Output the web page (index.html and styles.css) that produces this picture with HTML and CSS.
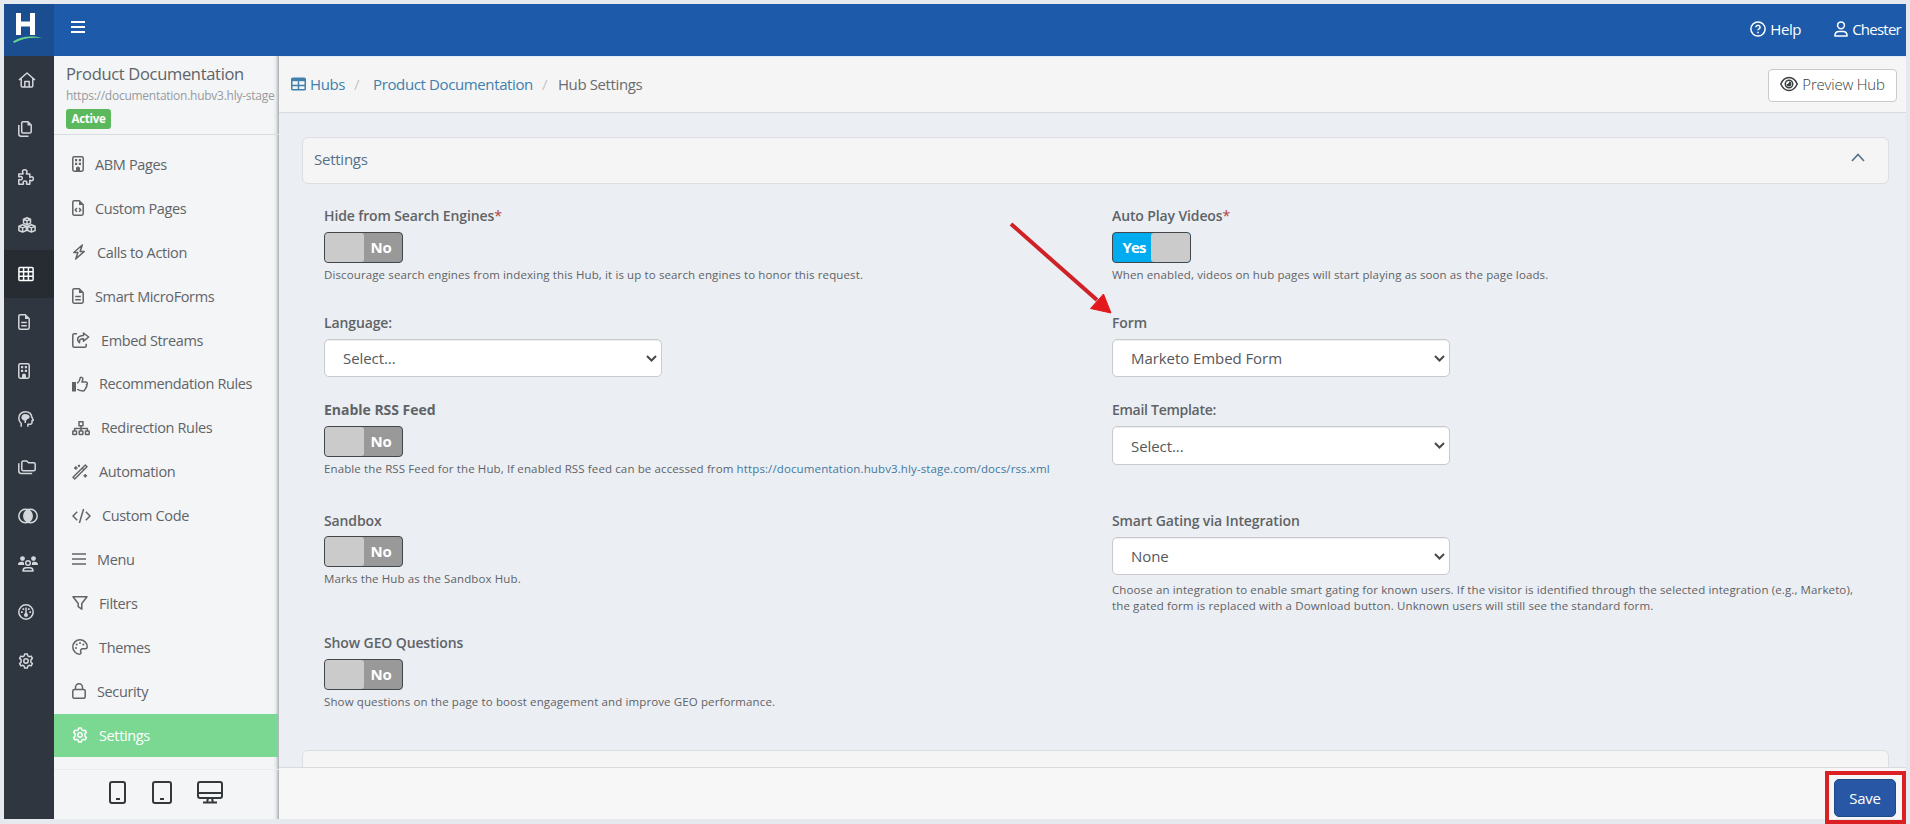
FILE: index.html
```html
<!DOCTYPE html>
<html lang="en">
<head>
<meta charset="utf-8">
<title>Hub Settings</title>
<link rel="stylesheet" href="styles.css">
</head>
<body>
<svg class="defs" aria-hidden="true">
  <symbol id="file" viewBox="0 0 12 16"><path d="M2.2.8h5.1l3.9 3.9v9.1c0 .8-.6 1.4-1.4 1.4H2.2c-.8 0-1.4-.6-1.4-1.4V2.2C.8 1.4 1.4.8 2.2.8z"/><path class="fill" d="M7 1l4 4H7z"/><path d="M3.2 8.5h5.6M3.2 11.7h5.6"/></symbol>
  <symbol id="filecode" viewBox="0 0 12 16"><path d="M2.2.8h5.1l3.9 3.9v9.1c0 .8-.6 1.4-1.4 1.4H2.2c-.8 0-1.4-.6-1.4-1.4V2.2C.8 1.4 1.4.8 2.2.8z"/><path class="fill" d="M7 1l4 4H7z"/><path d="M4.9 8.1L3.2 9.9l1.7 1.8M7.1 8.1l1.7 1.8-1.7 1.8"/></symbol>
  <symbol id="building" viewBox="0 0 12 16"><rect x=".8" y=".8" width="10.4" height="14.4" rx="1.4"/><path class="fill" d="M3 3h2.2v2.2H3zM6.8 3H9v2.2H6.800zM3 6.700h2.200v2.200H3zM6.800 6.700H9v2.200H6.800zM4 15v-2.500a2 2 0 0 1 4 0V15z"/></symbol>
  <symbol id="gear" viewBox="0 0 16 16"><path d="M6.700.9h2.600l.5 2 1.300.8 2-.6 1.300 2.300-1.500 1.400v2.400l1.500 1.400-1.300 2.300-2-.6-1.300.8-.5 2H6.700l-.5-2-1.300-.8-2 .6-1.300-2.300 1.500-1.400V6.800L1.600 5.400l1.300-2.300 2 .6 1.300-.8z"/><circle cx="8" cy="8" r="2.200"/></symbol>
</svg>
<div class="app">
  <header class="topbar">
    <div class="brand"><svg class="brand-mark" viewBox="0 0 32 32" width="32" height="32"><path class="letter-bar" d="M6.500 1v22M20.500 1v22M6.500 12h14"/><path class="swoosh" d="M1 29.500C9 24 20 23.500 30 26 19 25 10 26.500 2 31z"/></svg></div>
    <svg class="burger" viewBox="0 0 14 12" width="14" height="12"><path d="M0 1h14M0 6h14M0 11h14"/></svg>
    <div class="user-links">
      <a class="user-link"><svg class="icon" viewBox="0 0 16 16" width="16" height="16"><circle cx="8" cy="8" r="7.100"/><path d="M5.900 6.300a2.100 1.900 0 1 1 3.200 1.600c-.7.4-1.100.7-1.100 1.400"/><path d="M8 10.700v1.500"/></svg>Help</a>
      <a class="user-link user-name"><svg class="icon" viewBox="0 0 14 16" width="14" height="16"><circle cx="7" cy="4.300" r="3.400"/><path d="M.9 15.100c0-3 1.700-4.700 4-4.700h4.200c2.300 0 4 1.700 4 4.700z"/></svg>Chester</a>
    </div>
  </header>
  <div class="body">
    <nav class="rail">
      <a class="rail-item"><svg class="icon" viewBox="0 0 18 16" width="18" height="16"><path d="M1 8l8-7 8 7M3.200 6.500v7.300c0 .8.5 1.300 1.300 1.300h9c.8 0 1.300-.5 1.300-1.300V6.500M6.800 15V9.500h4.400V15"/></svg></a>
      <a class="rail-item"><svg class="icon" viewBox="0 0 14 16" width="14" height="16"><path d="M5 .8h5l3.200 3.200v6.800c0 .8-.5 1.300-1.300 1.300H5c-.8 0-1.300-.5-1.300-1.300V2.100C3.700 1.300 4.200.8 5 .8zM.8 4v9c0 1.300.9 2.200 2.200 2.200h7.500"/><path class="fill" d="M9.500 1v3.500H13z"/></svg></a>
      <a class="rail-item"><svg class="icon" viewBox="0 0 16 16" width="16" height="16"><path d="M.8 5h4.100c.6-.4-.4-1-.4-2.200C4.500 1.600 5.400.8 6.700.8S9 1.600 9 2.800C9 4 8 4.600 8.600 5h3.200v3.300c.4.500 1-.5 2-.5.900 0 1.500.8 1.500 2s-.6 2-1.500 2c-1 0-1.600-1-2-.5v3.900H8.700c-.6-.4.200-1 .2-1.800s-.9-1.300-1.900-1.300-1.900.5-1.900 1.300.8 1.400.2 1.800H.8v-4.500c.4-.5 1 .2 1.900.2S4.300 10.200 4.300 9.200 3.600 7.500 2.700 7.500 1.200 8.200.8 7.700z"/></svg></a>
      <a class="rail-item"><svg class="icon" viewBox="0 0 18 16" width="18" height="16"><path d="M9 .8l3.500 1.400v3.900L9 7.600 5.500 6.100V2.200zM5.500 2.300L9 3.800l3.500-1.500M9 3.800v3.600M4.600 7.800l3.700 1.500v4.200l-3.700 1.600L.9 13.500V9.300zM.9 9.400l3.700 1.500 3.700-1.500M4.600 11v4M13.400 7.800l3.700 1.500v4.200l-3.700 1.600-3.700-1.600V9.300zM9.700 9.400l3.700 1.500 3.700-1.500M13.400 11v4"/></svg></a>
      <a class="rail-item rail-active"><svg class="icon" viewBox="0 0 16 16" width="16" height="16"><rect x=".9" y="1.400" width="14.200" height="13.200" rx="1"/><path d="M1 5.800h14M1 10.200h14M5.600 1.500v13M10.400 1.500v13"/></svg></a>
      <a class="rail-item"><svg class="icon" width="12" height="16"><use href="#file"/></svg></a>
      <a class="rail-item"><svg class="icon" width="12" height="16"><use href="#building"/></svg></a>
      <a class="rail-item"><svg class="icon" viewBox="0 0 16 16" width="16" height="16"><path d="M3.200 15.700v-3.400C1.700 11.200.8 9.500.8 7.300.8 3.500 3.500.8 7.300.8c3.600 0 6.200 2.300 6.600 5.500l1.400 2.900-1.300.6v2c0 .9-.6 1.400-1.400 1.400H9.900v2.500"/><path class="fill" d="M3.400 6.600C3.400 4.600 5 3 7 3s4.300.8 4.600 2.600c.3 1.500-.7 2.500-2.200 2.500L8 10v2H6.500V9.500c-1.700 0-3.100-1.200-3.100-2.900z"/></svg></a>
      <a class="rail-item"><svg class="icon" viewBox="0 0 18 16" width="18" height="16"><path d="M5.300 2h3.500l1.700 1.800h5.200c.8 0 1.500.6 1.500 1.500v4.900c0 .9-.6 1.500-1.500 1.500H5.300c-.9 0-1.500-.6-1.500-1.500V3.500C3.800 2.600 4.400 2 5.300 2zM.8 4.200v7.900c0 1.400 1 2.400 2.400 2.400h11"/></svg></a>
      <a class="rail-item"><svg class="icon" viewBox="0 0 20 16" width="20" height="16"><circle cx="7.500" cy="8" r="6.700"/><circle cx="12.500" cy="8" r="6.700"/><path class="fill" d="M10 1.900a6.700 6.700 0 0 1 0 12.200 6.700 6.700 0 0 1 0-12.200z"/></svg></a>
      <a class="rail-item"><svg class="icon" viewBox="0 0 20 16" width="20" height="16"><g class="fill"><circle cx="4.500" cy="2.600" r="2.400"/><circle cx="15.500" cy="2.600" r="2.400"/><path d="M0 9c0-2.200 1.200-3.300 3.500-3.300 1 0 2 .3 2.500.8C5.800 7.800 6 8.700 6.500 9zM20 9c0-2.200-1.200-3.300-3.500-3.300-1 0-2 .3-2.500.8.2 1.300 0 2.200-.5 2.500z"/></g><circle cx="10" cy="7" r="2.300"/><path d="M5 15.100c0-2 1.200-3.300 3-3.300h4c1.800 0 3 1.300 3 3.300z"/></svg></a>
      <a class="rail-item"><svg class="icon" viewBox="0 0 16 16" width="16" height="16"><circle cx="8" cy="8" r="7.200"/><circle class="fill" cx="8" cy="11" r="2"/><path d="M8 10V3.500"/><path class="fill" d="M3 7.300h1.700V9H3zM11.300 7.300H13V9h-1.700zM4.500 4.200h1.700v1.700H4.500zM9.900 4.200h1.700v1.700H9.900z"/></svg></a>
      <a class="rail-item"><svg class="icon" width="16" height="16"><use href="#gear"/></svg></a>
    </nav>
    <aside class="sidebar">
      <div class="hub-head">
        <div class="hub-name">Product Documentation</div>
        <div class="hub-url">https://documentation.hubv3.hly-stage</div>
        <span class="badge">Active</span>
      </div>
      <div class="menu">
        <a class="menu-item"><svg class="icon" width="12" height="16"><use href="#building"/></svg>ABM Pages</a>
        <a class="menu-item"><svg class="icon" width="12" height="16"><use href="#filecode"/></svg>Custom Pages</a>
        <a class="menu-item"><svg class="icon" viewBox="0 0 14 16" width="14" height="16"><path d="M10.300 1L1.800 8.500h4.100L3.700 15l8.500-7.500H8.100z"/></svg>Calls to Action</a>
        <a class="menu-item"><svg class="icon" width="12" height="16"><use href="#file"/></svg>Smart MicroForms</a>
        <a class="menu-item"><svg class="icon" viewBox="0 0 18 16" width="18" height="16"><path d="M5 1.800H2.300C1.400 1.800.8 2.400.8 3.300v10.400c0 .9.6 1.500 1.500 1.500h10.400c.9 0 1.500-.6 1.500-1.500v-2"/><path d="M11.500 1l5.200 4-5.200 4.200V6.700c-3-.1-4.300.7-4 4.100C4.300 8 5 3.600 11.500 3.400z"/></svg>Embed Streams</a>
        <a class="menu-item"><svg class="icon" viewBox="0 0 16 16" width="16" height="16"><path class="fill" d="M0 6h4v9.500H0z"/><path d="M5.300 7.300c1.800-1.400 2.500-3 2.700-4.800.3-1.700 3-1.500 2.800.6-.1 1.200-.5 2-.9 2.900h3.800c2 0 2 2.300.8 2.700.8.900.3 2.300-.6 2.500.2 1.300-.2 2-1.200 2.200 0 1-.7 1.500-1.700 1.500-2.500 0-4.300-.2-5.700-1.600"/></svg>Recommendation Rules</a>
        <a class="menu-item"><svg class="icon" viewBox="0 0 18 16" width="18" height="16"><rect x="7" y="1.800" width="4" height="4"/><rect x=".8" y="11" width="3.700" height="3.500" rx=".6"/><rect x="7.200" y="11" width="3.700" height="3.500" rx=".6"/><rect x="13.500" y="11" width="3.700" height="3.500" rx=".6"/><path d="M9 6v5M2.600 11V8.400h12.800V11"/></svg>Redirection Rules</a>
        <a class="menu-item"><svg class="icon" viewBox="0 0 16 16" width="16" height="16"><path d="M1 13.300L13.300 1l1.700 1.700L2.700 15zM10.300 4l1.700 1.700M2 4h3.600M3.800 2.200v3.600M11.500 11.700h3.600M13.300 9.900v3.600M7 .7v2.200M5.900 1.800h2.200"/></svg>Automation</a>
        <a class="menu-item"><svg class="icon" viewBox="0 0 19 16" width="19" height="16"><path d="M5.200 3.700L1 8l4.200 4.300M13.800 3.700L18 8l-4.200 4.300M11.600 1L7.400 15"/></svg>Custom Code</a>
        <a class="menu-item"><svg class="icon" viewBox="0 0 14 16" width="14" height="16"><path d="M0 3h14M0 8h14M0 13h14"/></svg>Menu</a>
        <a class="menu-item"><svg class="icon" viewBox="0 0 16 16" width="16" height="16"><path d="M1 1.800h14L9.800 8.500v5.700l-3.600-2.500V8.500z"/></svg>Filters</a>
        <a class="menu-item"><svg class="icon" viewBox="0 0 16 16" width="16" height="16"><path d="M15.200 7.800C15.200 3.900 12 .8 8 .8S.8 4 .8 8 4 15.200 7.500 15.200c1.500 0 1.700-1.100 1.300-2.100-.8-2 .3-3.300 2-3.300h2.500c1.100 0 1.900-.8 1.900-2z"/><g class="fill"><circle cx="4" cy="9" r="1"/><circle cx="4.700" cy="5.600" r="1"/><circle cx="8" cy="3.900" r="1"/><circle cx="11.300" cy="5.600" r="1"/></g></svg>Themes</a>
        <a class="menu-item"><svg class="icon" viewBox="0 0 14 16" width="14" height="16"><rect x=".8" y="6.500" width="12.400" height="8.700" rx="1.500"/><path d="M3.500 6.500v-2a3.500 3.700 0 0 1 7 0v2"/></svg>Security</a>
        <a class="menu-item menu-active"><svg class="icon" width="16" height="16"><use href="#gear"/></svg>Settings</a>
      </div>
      <div class="devices">
        <svg class="device" viewBox="0 0 18 23" width="18" height="23"><rect x="1" y="1" width="15" height="21" rx="2"/><path d="M7 18h4"/></svg>
        <svg class="device" viewBox="0 0 20 23" width="20" height="23"><rect x="1" y="1" width="18" height="21" rx="2"/><path d="M8 18h4"/></svg>
        <svg class="device" viewBox="0 0 26 23" width="26" height="23"><rect x="1" y="1" width="24" height="16" rx="2"/><path d="M1 12h24M11 17l-.8 4M15 17l.8 4M6 21.500h14"/></svg>
      </div>
    </aside>
    <main class="main">
      <div class="crumbs">
        <a class="crumb-link"><svg class="crumb-icon" viewBox="0 0 16 14" width="15" height="14"><path class="fill" d="M1 1h14v3H1z"/><rect x=".8" y=".8" width="14.400" height="12.400" rx="1.200"/><path d="M1 8.500h14M8 4v9"/></svg>Hubs</a>
        <span class="slash">/</span>
        <a class="crumb-link crumb-hub">Product Documentation</a>
        <span class="slash">/</span>
        <span class="crumb-here">Hub Settings</span>
        <button class="preview"><svg class="eye" viewBox="0 0 18 16" width="18" height="16"><path d="M.8 8C2.500 4 5.500 1.500 9 1.500S15.500 4 17.200 8C15.500 12 12.500 14.500 9 14.500S2.500 12 .8 8z"/><circle cx="9" cy="8" r="3.700"/><path class="fill" d="M9 5.600A2.400 2.400 0 1 1 6.600 8C8.200 8.300 9.200 7.200 9 5.600z"/></svg>Preview Hub</button>
      </div>
      <div class="content">
        <section class="panel-head"><span>Settings</span><svg class="chevron" viewBox="0 0 14 9" width="14" height="9"><path d="M1 8l6-6.500L13 8"/></svg></section>
        <form class="fields">
          <div class="field"><label class="label">Hide from Search Engines<i class="req">*</i></label><div class="switch"><b class="knob"></b><b class="state">No</b></div><p class="hint">Discourage search engines from indexing this Hub, it is up to search engines to honor this request.</p></div>
          <div class="field"><label class="label">Auto Play Videos<i class="req">*</i></label><div class="switch switch-on"><b class="state">Yes</b><b class="knob"></b></div><p class="hint">When enabled, videos on hub pages will start playing as soon as the page loads.</p></div>
          <div class="field"><label class="label">Language:</label><div class="select">Select...<svg class="caret" viewBox="0 0 11 7" width="11" height="7"><path d="M1 1l4.500 4.500L10 1"/></svg></div></div>
          <div class="field"><label class="label">Form</label><div class="select">Marketo Embed Form<svg class="caret" viewBox="0 0 11 7" width="11" height="7"><path d="M1 1l4.500 4.500L10 1"/></svg></div></div>
          <div class="field"><label class="label label-bold">Enable RSS Feed</label><div class="switch"><b class="knob"></b><b class="state">No</b></div><p class="hint">Enable the RSS Feed for the Hub, If enabled RSS feed can be accessed from <a class="hint-link">https://documentation.hubv3.hly-stage.com/docs/rss.xml</a></p></div>
          <div class="field"><label class="label label-colon">Email Template:</label><div class="select select-tall">Select...<svg class="caret" viewBox="0 0 11 7" width="11" height="7"><path d="M1 1l4.500 4.500L10 1"/></svg></div></div>
          <div class="field"><label class="label label-tight">Sandbox</label><div class="switch"><b class="knob"></b><b class="state">No</b></div><p class="hint">Marks the Hub as the Sandbox Hub.</p></div>
          <div class="field"><label class="label">Smart Gating via Integration</label><div class="select">None<svg class="caret" viewBox="0 0 11 7" width="11" height="7"><path d="M1 1l4.500 4.500L10 1"/></svg></div><p class="hint hint-select">Choose an integration to enable smart gating for known users. If the visitor is identified through the selected integration (e.g., Marketo),<br>the gated form is replaced with a Download button. Unknown users will still see the standard form.</p></div>
          <div class="field"><label class="label">Show GEO Questions</label><div class="switch"><b class="knob"></b><b class="state">No</b></div><p class="hint">Show questions on the page to boost engagement and improve GEO performance.</p></div>
        </form>
        <section class="panel-head"></section>
      </div>
      <footer class="footer"><button class="save">Save</button></footer>
    </main>
  </div>
</div>
<svg class="arrow" viewBox="0 0 104 94" width="104" height="94"><path class="arrow-line" d="M2 4l86 76"/><path class="arrow-tip" d="M102 93L81.500 88.500 94.500 74z"/></svg>
<div class="highlight"></div>
</body>
</html>
```
FILE: styles.css
```css
* { box-sizing: border-box; }
body { margin: 0; width: 1910px; height: 824px; overflow: hidden; padding: 4px 5px 5px 4px; background: #e6e9ed; font-family: "Open Sans", "Noto Sans", sans-serif; color: #5f6366; }
.defs { position: absolute; width: 0; height: 0; }
svg { flex: none; fill: none; stroke: currentColor; stroke-width: 1.5; stroke-linejoin: round; }
.fill { fill: currentColor; stroke: none; }
.app { width: 1902px; height: 815px; display: flex; flex-direction: column; overflow: hidden; }
.topbar { height: 52px; flex: none; display: flex; align-items: center; background: #1d5aa9; color: #fff; }
.brand { width: 50px; height: 52px; padding: 8px 0 0 8px; background: #1b4e91; }
.brand-mark { display: block; }
.letter-bar { stroke: #fff; stroke-width: 5; }
.swoosh { fill: #69d58e; stroke: none; }
.burger { margin: -6px 0 0 17px; stroke-width: 1.8; }
.user-links { margin-left: auto; display: flex; gap: 33px; padding: 0 5px 3px 0; }
.user-link { display: flex; align-items: center; gap: 4px; font-size: 15px; letter-spacing: -.42px; }
.user-name { letter-spacing: -.75px; }
.body { flex: 1; min-height: 0; display: flex; }
.rail { width: 50px; flex: none; background: #30363f; color: #d4d8dc; }
.rail-item { display: flex; align-items: center; height: 48.400px; padding-left: 14px; }
.rail-active { background: #272c33; color: #fff; }
.sidebar { width: 225px; flex: none; display: flex; flex-direction: column; overflow: hidden; background: linear-gradient(to right, #f4f5f7 219px, #e6e8ea 222px, #a9adb1 225px); }
.hub-head { height: 79px; padding: 5px 0 0 12px; border-bottom: 1px solid #d9dbde; white-space: nowrap; }
.hub-name { font-size: 16.500px; line-height: 25px; letter-spacing: -.32px; }
.hub-url { font-size: 12px; line-height: 18px; letter-spacing: -.26px; margin-top: 1px; color: #979a9d; }
.badge { display: block; width: 45px; height: 20px; margin-top: 4px; border-radius: 3px; background: #5cb85c; color: #fff; font-size: 11.500px; font-weight: 700; line-height: 20px; text-align: center; letter-spacing: -.3px; }
.menu { padding-top: 8px; }
.menu-item { display: flex; align-items: center; gap: 11px; height: 43.900px; width: 224px; padding: 0 0 1px 18px; font-size: 14.500px; letter-spacing: -.36px; color: #616467; }
.menu-active { background: #7bd892; color: #fff; }
.devices { flex: 1; margin-top: 12px; padding: 11px 0 0 55px; display: flex; align-items: flex-start; gap: 25px; border-top: 1px solid #e9ebed; }
.device { color: #35383a; stroke-width: 2; }
.main { flex: 1; min-width: 0; display: flex; flex-direction: column; background: #ebeef3; }
.crumbs { flex: none; height: 57px; display: flex; align-items: center; padding: 0 9px 2px 12px; background: #f5f5f5; border-top: 1px solid #e3ebf5; border-bottom: 1px solid #d8dadd; font-size: 15px; letter-spacing: -.38px; }
.crumb-link { display: flex; align-items: center; gap: 4px; color: #3f80ad; }
.crumb-icon { stroke-width: 1.600; }
.slash { width: 8px; margin: 0 8px 0 9px; color: #c3c6c8; }
.crumb-hub { margin-left: 3px; }
.crumb-here { color: #696c6f; }
.preview { margin-left: auto; width: 129px; height: 33px; margin-top: 3px; padding: 0 0 2px; display: flex; align-items: center; justify-content: center; gap: 4px; border: 1px solid #c8cacc; border-radius: 4px; background: #fff; color: #3b3e40; font: 300 15px "Open Sans", sans-serif; letter-spacing: -.22px; }
.content { flex: 1; min-height: 0; overflow: hidden; padding: 24px 17px 0 23px; }
.panel-head { height: 47px; display: flex; align-items: center; justify-content: space-between; padding: 0 23px 3px 11px; border: 1px solid #dcdee1; border-radius: 6px; background: #f5f5f5; color: #55708a; font-size: 15px; letter-spacing: -.25px; }
.chevron { margin-top: -3px; stroke-width: 1.600; stroke-linejoin: miter; }
.fields { height: 566px; padding: 18px 0 0 22px; display: grid; grid-template-columns: 788px 1fr; grid-template-rows: 107px 87px 111px 122px 1fr; }
.field { white-space: nowrap; }
.label { display: block; height: 30px; line-height: 28px; font-size: 14px; font-weight: 600; letter-spacing: -.12px; }
.label-bold { font-weight: 700; letter-spacing: -.02px; }
.label-colon { letter-spacing: -.28px; }
.label-tight { height: 29px; }
.req { color: #b3403e; font-style: normal; font-weight: 400; }
.switch { width: 79px; height: 31px; display: flex; overflow: hidden; border: 1px solid #44474a; border-radius: 4px; background: #999; color: #fff; }
.switch-on { background: #00abf0; }
.knob { width: 39px; border-radius: 3px; background: #cbcbcb; }
.state { flex: 1; padding-right: 4px; font-size: 15px; line-height: 29px; text-align: center; letter-spacing: -.3px; }
.switch-on .state { padding: 0 0 0 4px; letter-spacing: -.9px; }
.hint { margin: 3px 0 0; font-size: 11.500px; line-height: 18px; letter-spacing: .12px; }
.hint-select { margin-top: 7px; line-height: 16px; }
.hint-link { color: #42799f; }
.select { width: 338px; height: 38px; display: flex; align-items: center; justify-content: space-between; padding: 0 4px 0 18px; border: 1px solid #c8cacd; border-radius: 5px; background: #fff; box-shadow: inset 0 1px 1px rgba(0, 0, 0, .07); font-size: 15px; letter-spacing: -.07px; color: #55585b; }
.select-tall { height: 39px; }
.caret { color: #47494b; stroke-width: 2; stroke-linejoin: miter; }
.footer { flex: none; height: 52px; display: flex; justify-content: flex-end; padding: 11px 10px 0 0; border-top: 1px solid #d8dadd; background: #f7f7f7; }
.save { width: 62px; height: 38px; padding: 0; border: 1px solid #204a86; border-radius: 5px; background: #2858a5; color: #fff; font: 15px "Open Sans", sans-serif; letter-spacing: -.2px; }
.arrow { position: absolute; left: 1009px; top: 220px; stroke: none; }
.arrow-line { stroke: #cf2126; stroke-width: 4; }
.arrow-tip { fill: #e21a1d; stroke: #e21a1d; stroke-width: 1; stroke-linejoin: miter; }
.highlight { position: absolute; left: 1825px; top: 771px; width: 81px; height: 53px; border: 4px solid #db2023; }
```
